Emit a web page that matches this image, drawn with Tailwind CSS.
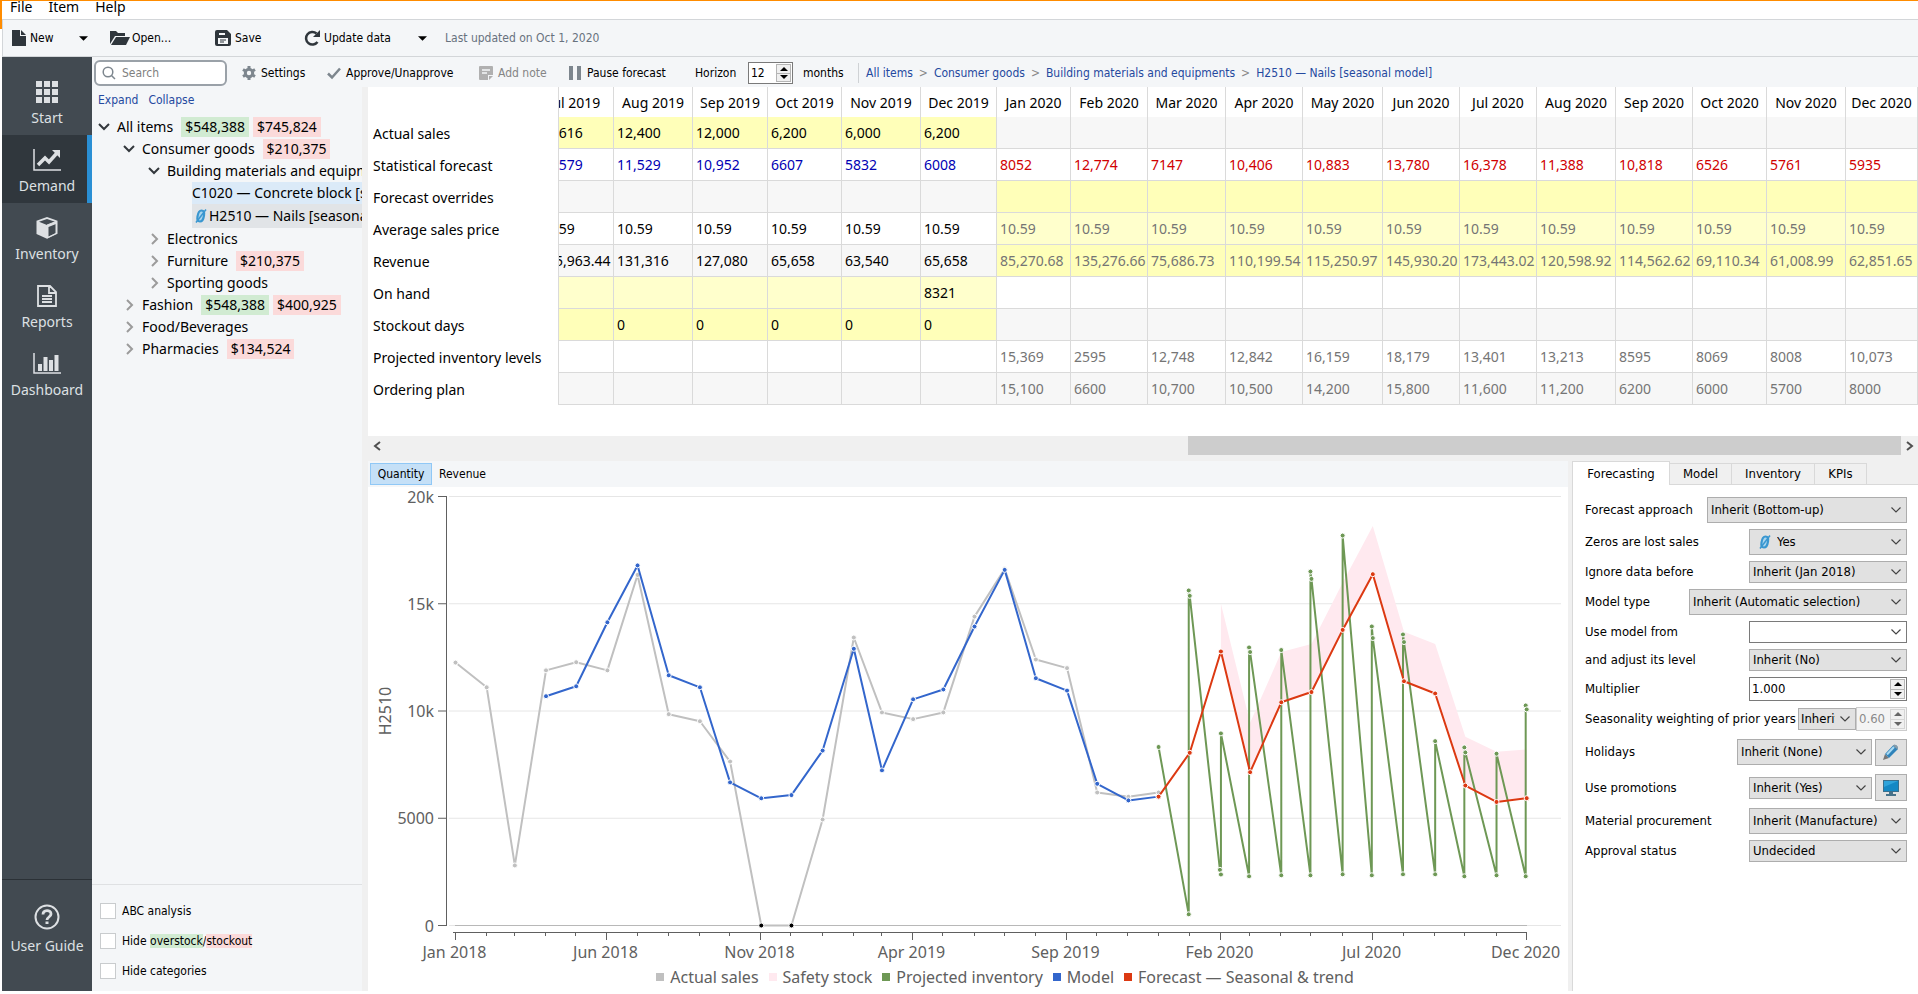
<!DOCTYPE html>
<html lang="en">
<head>
    <meta charset="UTF-8" />
    <meta name="viewport" content="width=device-width, initial-scale=1" />
    <title>Demand - H2510 Nails</title>
    <script src="https://cdn.jsdelivr.net/npm/@tailwindcss/browser@4"></script>
</head>
<body class="relative flex flex-col h-screen overflow-hidden bg-white pl-0.5 pb-[3px] border-t border-[#ff8c00] text-black text-xs font-['DejaVu_Sans_Condensed','DejaVu_Sans',sans-serif]">
    <!-- Shared icons -->
    <svg class="hidden">
        <symbol id="chevron" viewBox="0 0 10 6"><path d="M.5 .5 5 5 9.500 .5" fill="none" stroke="currentColor" stroke-width="1.200" /></symbol>
        <symbol id="open" viewBox="0 0 12 8"><path d="M1 1 6 6 11 1" fill="none" stroke="#33383d" stroke-width="2" /></symbol>
        <symbol id="closed" viewBox="0 0 12 12"><path d="M4 1 9 6 4 11" fill="none" stroke="#9b9b9b" stroke-width="2" /></symbol>
        <symbol id="caret" viewBox="0 0 10 5"><path d="M0 0h10L5 5z" fill="currentColor" /></symbol>
        <symbol id="zero" viewBox="0 0 12 14"><path d="M6.500 1.500c2.500 0 3 1.500 2.500 5s-1.500 6-4 6-3-1.500-2.500-5 1.500-6 4-6z" fill="#a9d5ee" stroke="#3a97d0" stroke-width="2.200" /><path d="M1 13.500 11 .5" stroke="#3a97d0" stroke-width="1.500" /></symbol>
    </svg>
    <div class="absolute left-0 top-0 w-0.5 h-7 bg-[#ff8c00]"></div>

    <!-- Menu bar -->
    <div class="flex items-start gap-4 h-[18px] shrink-0 pl-2 text-sm font-['Noto_Sans',sans-serif] overflow-hidden">
        <a href="#" class="h-3 flex items-center">File</a>
        <a href="#" class="h-3 flex items-center">Item</a>
        <a href="#" class="h-3 flex items-center">Help</a>
    </div>

    <!-- Main toolbar -->
    <header class="flex items-center h-[38px] shrink-0 pl-2 bg-[#f4f6f8] border-y border-l border-[#d3d6d9]">
        <button class="flex items-center gap-[3px] w-[68px]">
            <svg class="w-4 h-4" viewBox="0 0 16 16" fill="#2f363c"><path d="M1 0h8v6h6v10H1z" /><path d="M10 0l5 5h-5z" /></svg>New
        </button>
        <button class="w-[31px]" aria-label="New options"><svg class="w-[9px] h-[5px]"><use href="#caret" /></svg></button>
        <button class="flex items-center gap-0.5 w-[105px]">
            <svg class="w-5 h-4" viewBox="0 0 20 16" fill="#2f363c"><path d="M0 14V1h6l2 2h7v3H5z" /><path d="M6 7h14l-4 8H1z" /></svg>Open...
        </button>
        <button class="flex items-center gap-1 w-[89px]">
            <svg class="w-4 h-4" viewBox="0 0 16 16"><path d="M2 0h10l4 4v10a2 2 0 0 1-2 2H2a2 2 0 0 1-2-2V2a2 2 0 0 1 2-2z" fill="#2f363c" /><path d="M4 3h6v2H4zM3 8h10v6H3z" fill="#f4f6f8" /><path d="M5 10h6M5 12h4" stroke="#2f363c" /></svg>Save
        </button>
        <button class="flex items-center gap-1 w-[114px]">
            <svg class="w-4 h-4" viewBox="0 0 16 16"><path d="M12.500 3.500A6.300 6.300 0 1 0 13.500 12" fill="none" stroke="#2f363c" stroke-width="2.500" /><path d="M16 0v7H9z" fill="#2f363c" /></svg>Update data
        </button>
        <button class="w-[27px]" aria-label="Update options"><svg class="w-[9px] h-[5px]"><use href="#caret" /></svg></button>
        <span class="text-[#68727e]">Last updated on Oct 1, 2020</span>
    </header>

    <div class="flex flex-1 min-h-0">
        <!-- Navigation -->
        <nav class="flex flex-col w-[90px] shrink-0 pt-2.5 bg-[#424a51] text-[#dde0e3] text-sm font-['Noto_Sans',sans-serif]">
            <a href="#" class="flex flex-col items-center h-[68px] pt-[13px] gap-1">
                <svg class="w-7 h-6" viewBox="0 0 28 24" fill="currentColor"><path d="M3 1h6v6H3zM11 1h6v6h-6zM19 1h6v6h-6zM3 9h6v6H3zM11 9h6v6h-6zM19 9h6v6h-6zM3 17h6v6H3zM11 17h6v6h-6zM19 17h6v6h-6z" /></svg>
                Start
            </a>
            <a href="#" class="flex flex-col items-center h-[68px] pt-[13px] gap-1 bg-[#30373d] border-r-5 border-[#2a8fd4] pl-[5px]">
                <svg class="w-7 h-6" viewBox="0 0 28 24"><path d="M1 1v21h27" fill="none" stroke="currentColor" stroke-width="1.500" /><path d="M5 17l7-7 4 4 8-9" fill="none" stroke="currentColor" stroke-width="3.500" /><path d="M19 2h8v8z" fill="currentColor" /></svg>
                Demand
            </a>
            <a href="#" class="flex flex-col items-center h-[68px] pt-[13px] gap-1">
                <svg class="w-7 h-6" viewBox="0 0 28 24"><path d="M14 1l10.500 3.800v13L14 22.800 3.500 18V4.800z" fill="currentColor" /><path d="M14 3l8 2.800-8 3.200-8-3.200zM15.500 11l7.500-3v9l-7.500 3.500z" fill="#424a51" /><path d="M14 9l9-3.500v12L14 22" fill="none" stroke="currentColor" /></svg>
                Inventory
            </a>
            <a href="#" class="flex flex-col items-center h-[68px] pt-[13px] gap-1">
                <svg class="w-7 h-6" viewBox="0 0 28 24" fill="none" stroke="currentColor" stroke-width="1.800"><path d="M5 2h12l6 6v14H5zM16 2v7h7M9 12h10M9 15h10M9 18h10" /></svg>
                Reports
            </a>
            <a href="#" class="flex flex-col items-center h-[68px] pt-[13px] gap-1">
                <svg class="w-7 h-6" viewBox="0 0 28 24"><path d="M1 1v20h27" fill="none" stroke="currentColor" stroke-width="1.500" /><path d="M5 12h4v7H5zM10.500 5h4v14h-4zM16 8h4v11h-4zM21.500 3h4v16h-4z" fill="currentColor" /></svg>
                Dashboard
            </a>
            <a href="#" class="flex flex-col items-center h-[112px] mt-auto pt-6 gap-1 border-t border-[#2b3136]">
                <svg class="w-7 h-7" viewBox="0 0 28 28"><circle cx="14" cy="13" r="11.500" fill="none" stroke="currentColor" stroke-width="2" /><path d="M10 10.500c0-5 8-5 8-.5 0 3-4 3-4 6" fill="none" stroke="currentColor" stroke-width="2.800" /><path d="M12.500 17.500h3v2.500h-3z" fill="currentColor" /></svg>
                User Guide
            </a>
        </nav>

        <div class="flex flex-col flex-1 min-w-0 bg-[#f4f6f8]">
            <!-- Item toolbar -->
            <div class="flex items-center h-[30px] shrink-0 pl-0.5 pt-0.5 whitespace-nowrap">
                <label class="flex items-center gap-1.5 w-[133px] h-[26px] mr-[15px] px-1.5 bg-white border-2 border-[#9aa1a8] rounded-md">
                    <svg class="w-3.5 h-3.5 shrink-0" viewBox="0 0 14 14" fill="none" stroke="#7d868e" stroke-width="1.500"><circle cx="6" cy="6" r="4.800" /><path d="M9.500 9.500 13 13" /></svg>
                    <input type="text" placeholder="Search" aria-label="Search" class="w-full outline-none placeholder:text-[#7f7f7f]" />
                </label>
                <button class="flex items-center gap-[5px] w-[85px]">
                    <svg class="w-3.5 h-3.5" viewBox="0 0 14 14"><circle cx="7" cy="7" r="3.700" fill="none" stroke="#7d868e" stroke-width="3" /><path d="M7 0v2.500M7 11.500V14M1 3.500l2 1.200M11 9.300l2 1.200M1 10.500l2-1.200M11 4.700l2-1.200" stroke="#7d868e" stroke-width="3" /></svg>Settings
                </button>
                <button class="flex items-center gap-[5px] w-[152px]">
                    <svg class="w-3.5 h-3.5" viewBox="0 0 14 14"><path d="M1 7.500 5 11.500 13 2.500" fill="none" stroke="#7d868e" stroke-width="2.500" /></svg>Approve/Unapprove
                </button>
                <button class="flex items-center gap-[5px] w-[90px] text-[#858585]" disabled>
                    <svg class="w-3.5 h-3.5" viewBox="0 0 14 14"><path d="M1 0h12a1 1 0 0 1 1 1v8H9v5H1a1 1 0 0 1-1-1V1a1 1 0 0 1 1-1z" fill="#b0b0b0" /><path d="M10 14v-4h4z" fill="#b0b0b0" /><path d="M3 4h8M3 7h5" stroke="#f4f6f8" stroke-width="1.500" /></svg>Add note
                </button>
                <button class="flex items-center gap-1.5 w-[126px]">
                    <svg class="w-3 h-3.5" viewBox="0 0 12 14" fill="#7d868e"><path d="M0 0h4v14H0zM8 0h4v14H8z" /></svg>Pause forecast
                </button>
                <label for="horizon" class="w-[53px]">Horizon</label>
                <div class="flex items-center w-[45px] h-[22px] mr-2.5 p-px pl-0.5 bg-white border border-[#7a7a7a]">
                    <input id="horizon" type="text" value="12" class="w-[25px] outline-none" />
                    <div class="flex flex-col w-[15px] h-full">
                        <button class="flex flex-1 items-center justify-center bg-[#f0f0f0] border border-[#b5b5b5]" aria-label="Increase horizon"><svg class="w-2 h-1 rotate-180"><use href="#caret" /></svg></button>
                        <button class="flex flex-1 items-center justify-center bg-[#f0f0f0] border border-t-0 border-[#b5b5b5]" aria-label="Decrease horizon"><svg class="w-2 h-1"><use href="#caret" /></svg></button>
                    </div>
                </div>
                <span class="w-[55px]">months</span>
                <div class="flex gap-1.5 items-center h-5 pl-[7px] border-l border-[#cfd2d5] text-[#24499f]">
                    <a href="#">All items</a><span class="text-[#888]">&gt;</span>
                    <a href="#">Consumer goods</a><span class="text-[#888]">&gt;</span>
                    <a href="#">Building materials and equipments</a><span class="text-[#888]">&gt;</span>
                    <a href="#">H2510 — Nails [seasonal model]</a>
                </div>
            </div>

            <div class="flex flex-1 min-h-0">
                <!-- Item tree -->
                <aside class="flex flex-col w-[270px] shrink-0 overflow-hidden">
                    <div class="flex gap-2.5 pl-1.5 h-[29px] pt-[5px] text-[#24499f]">
                        <a href="#">Expand</a>
                        <a href="#">Collapse</a>
                    </div>
                    <ul class="whitespace-nowrap text-sm leading-5 font-['Noto_Sans',sans-serif]">
                        <li class="flex items-center h-[22px] pl-1.5"><svg class="w-3 h-2 mr-[7px]"><use href="#open" /></svg>All items <span class="ml-2 px-1 bg-[#d1ebd2]">$548,388</span><span class="ml-1 px-1 bg-[#fbdada]">$745,824</span></li>
                        <li class="flex items-center h-[22px] pl-[31px]"><svg class="w-3 h-2 mr-[7px]"><use href="#open" /></svg>Consumer goods <span class="ml-2 px-1 bg-[#fbdada]">$210,375</span></li>
                        <li class="flex items-center h-[22px] pl-14"><svg class="w-3 h-2 mr-[7px] shrink-0"><use href="#open" /></svg><span class="flex-1 min-w-0 overflow-hidden">Building materials and equipments</span></li>
                        <li class="flex items-center h-[22px] ml-[100px] bg-[#dbeaf8]"><span class="flex-1 min-w-0 overflow-hidden">C1020 — Concrete block [seasonal model]</span></li>
                        <li class="flex items-center h-6 ml-[100px] pl-[3px] bg-[#e1e4e7]"><svg class="w-3 h-3.5 mr-0.5 shrink-0"><use href="#zero" /></svg><span class="flex-1 min-w-0 overflow-hidden">H2510 — Nails [seasonal model]</span></li>
                        <li class="flex items-center h-[22px] pl-14"><svg class="w-3 h-3 mr-[7px]"><use href="#closed" /></svg>Electronics</li>
                        <li class="flex items-center h-[22px] pl-14"><svg class="w-3 h-3 mr-[7px]"><use href="#closed" /></svg>Furniture <span class="ml-2 px-1 bg-[#fbdada]">$210,375</span></li>
                        <li class="flex items-center h-[22px] pl-14"><svg class="w-3 h-3 mr-[7px]"><use href="#closed" /></svg>Sporting goods</li>
                        <li class="flex items-center h-[22px] pl-[31px]"><svg class="w-3 h-3 mr-[7px]"><use href="#closed" /></svg>Fashion <span class="ml-2 px-1 bg-[#d1ebd2]">$548,388</span><span class="ml-1 px-1 bg-[#fbdada]">$400,925</span></li>
                        <li class="flex items-center h-[22px] pl-[31px]"><svg class="w-3 h-3 mr-[7px]"><use href="#closed" /></svg>Food/Beverages</li>
                        <li class="flex items-center h-[22px] pl-[31px]"><svg class="w-3 h-3 mr-[7px]"><use href="#closed" /></svg>Pharmacies <span class="ml-2 px-1 bg-[#fbdada]">$134,524</span></li>
                    </ul>
                    <div class="flex flex-col gap-3.5 mt-auto pl-2 pt-[18px] pb-3 border-t border-[#dfe1e3] leading-4">
                        <label class="flex items-center gap-1.5"><input type="checkbox" class="appearance-none w-4 h-4 bg-white border border-[#c9ccce]" />ABC analysis</label>
                        <label class="flex items-center gap-1.5"><input type="checkbox" class="appearance-none w-4 h-4 bg-white border border-[#c9ccce]" /><span>Hide <span class="bg-[#d1ebd2]">overstock</span>/<span class="bg-[#fbdada]">stockout</span></span></label>
                        <label class="flex items-center gap-1.5"><input type="checkbox" class="appearance-none w-4 h-4 bg-white border border-[#c9ccce]" />Hide categories</label>
                    </div>
                </aside>

                <main class="flex flex-col flex-1 min-w-0 border-l-6 border-[#f0f0f0]">
                    <!-- Forecast table, rtl scroller so that it opens on the latest months -->
                    <div dir="rtl" class="shrink-0 overflow-hidden bg-white pb-[31px]">
                        <table dir="ltr" class="table-fixed w-max border-separate border-spacing-0 text-sm leading-5 whitespace-nowrap font-['Noto_Sans',sans-serif]">
                            <colgroup id="planCols"></colgroup>
                            <thead><tr id="planHead" class="h-[30px]"></tr></thead>
                            <tbody id="planBody"></tbody>
                        </table>
                    </div>
                    <div class="flex items-start h-[25px] shrink-0 bg-[#f0f0f0]">
                        <button class="w-[17px] h-[19px] flex items-center justify-center" aria-label="Scroll left"><svg class="w-2.5 h-2.5 -rotate-90 text-[#505050]" viewBox="0 0 10 10"><path d="M1 8l4-5 4 5" fill="none" stroke="currentColor" stroke-width="2" /></svg></button>
                        <div class="flex flex-1 justify-end"><div class="w-[47%] h-[19px] bg-[#cdcdcd]"></div></div>
                        <button class="w-[17px] h-[19px] flex items-center justify-center" aria-label="Scroll right"><svg class="w-2.5 h-2.5 rotate-90 text-[#505050]" viewBox="0 0 10 10"><path d="M1 8l4-5 4 5" fill="none" stroke="currentColor" stroke-width="2" /></svg></button>
                    </div>

                    <div class="flex flex-1 min-h-0">
                        <!-- Chart -->
                        <section class="flex flex-col flex-1 min-w-0 bg-white">
                            <div class="flex items-center gap-[7px] h-[26px] shrink-0 pl-0.5 bg-[#f4f6f8]">
                                <button class="h-[22px] px-1.5 w-[62px] bg-[#c5e0f7] border border-[#90c8f6]">Quantity</button>
                                <button>Revenue</button>
                            </div>
                            <svg id="chart" class="w-full flex-1 min-h-0 text-base font-['Noto_Sans',sans-serif]" viewBox="0 0 1200 476" fill="#606060"></svg>
                            <div class="flex justify-center gap-2.5 h-7 shrink-0 pl-[74px] text-base leading-7 whitespace-nowrap text-[#606060] font-['Noto_Sans',sans-serif]">
                                <span class="flex items-center gap-1.5"><i class="w-2 h-2 bg-[#c0c0c0]"></i>Actual sales</span>
                                <span class="flex items-center gap-1.5"><i class="w-2 h-2 bg-[#ffe9ef]"></i>Safety stock</span>
                                <span class="flex items-center gap-1.5"><i class="w-2 h-2 bg-[#6e9855]"></i>Projected inventory</span>
                                <span class="flex items-center gap-1.5"><i class="w-2 h-2 bg-[#3366cc]"></i>Model</span>
                                <span class="flex items-center gap-1.5"><i class="w-2 h-2 bg-[#dc3912]"></i>Forecast — Seasonal &amp; trend</span>
                            </div>
                        </section>

                        <!-- Forecasting settings -->
                        <aside class="flex flex-col w-[350px] shrink-0 pl-1 bg-[#f0f0f0] text-[13px]">
                            <div class="flex items-end h-6 shrink-0">
                                <button class="w-[98px] h-6 bg-white border border-b-0 border-[#d9d9d9]">Forecasting</button>
                                <button class="w-[62px] h-[22px] border border-l-0 border-[#d9d9d9]">Model</button>
                                <button class="w-[83px] h-[22px] border border-l-0 border-[#d9d9d9]">Inventory</button>
                                <button class="w-[52px] h-[22px] border border-l-0 border-[#d9d9d9]">KPIs</button>
                                <div class="flex-1 h-px bg-[#d9d9d9]"></div>
                            </div>
                            <form class="flex flex-col flex-1 gap-1.5 pl-3 pr-[11px] pt-3 bg-white border-l border-[#d9d9d9]">
                                <div class="flex items-center justify-between h-[26px]">
                                    <label for="approach">Forecast approach</label>
                                    <div class="relative w-[200px] h-[26px]"><select id="approach" class="appearance-none w-full h-full pl-[3px] bg-[#e1e1e1] border border-[#adadad]"><option>Inherit (Bottom-up)</option></select><svg class="absolute right-1.5 top-2.5 w-2.5 h-1.5 text-[#444]"><use href="#chevron" /></svg></div>
                                </div>
                                <div class="flex items-center justify-between h-[26px]">
                                    <label for="zeros">Zeros are lost sales</label>
                                    <div class="relative w-[158px] h-[26px]"><select id="zeros" class="appearance-none w-full h-full pl-[27px] bg-[#e1e1e1] border border-[#adadad]"><option>Yes</option></select><svg class="absolute left-2.5 top-1.5 w-3 h-3.5"><use href="#zero" /></svg><svg class="absolute right-1.5 top-2.5 w-2.5 h-1.5 text-[#444]"><use href="#chevron" /></svg></div>
                                </div>
                                <div class="flex items-center justify-between h-[22px]">
                                    <label for="ignore">Ignore data before</label>
                                    <div class="relative w-[158px] h-[22px]"><select id="ignore" class="appearance-none w-full h-full pl-[3px] bg-[#e1e1e1] border border-[#adadad]"><option>Inherit (Jan 2018)</option></select><svg class="absolute right-1.5 top-2 w-2.5 h-1.5 text-[#444]"><use href="#chevron" /></svg></div>
                                </div>
                                <div class="flex items-center justify-between h-[26px]">
                                    <label for="modelType">Model type</label>
                                    <div class="relative w-[218px] h-[26px]"><select id="modelType" class="appearance-none w-full h-full pl-[3px] bg-[#e1e1e1] border border-[#adadad]"><option>Inherit (Automatic selection)</option></select><svg class="absolute right-1.5 top-2.5 w-2.5 h-1.5 text-[#444]"><use href="#chevron" /></svg></div>
                                </div>
                                <div class="flex items-center justify-between h-[22px]">
                                    <label for="modelFrom">Use model from</label>
                                    <div class="relative w-[158px] h-[22px]"><select id="modelFrom" class="appearance-none w-full h-full pl-[3px] bg-white border border-[#7a7a7a]"><option></option></select><svg class="absolute right-1.5 top-2 w-2.5 h-1.5 text-[#444]"><use href="#chevron" /></svg></div>
                                </div>
                                <div class="flex items-center justify-between h-[22px]">
                                    <label for="adjust">and adjust its level</label>
                                    <div class="relative w-[158px] h-[22px]"><select id="adjust" class="appearance-none w-full h-full pl-[3px] bg-[#e1e1e1] border border-[#adadad]"><option>Inherit (No)</option></select><svg class="absolute right-1.5 top-2 w-2.5 h-1.5 text-[#444]"><use href="#chevron" /></svg></div>
                                </div>
                                <div class="flex items-center justify-between h-6">
                                    <label for="multiplier">Multiplier</label>
                                    <div class="flex items-center w-[158px] h-6 p-px pl-0.5 bg-white border border-[#7a7a7a]">
                                        <input id="multiplier" type="text" value="1.000" class="flex-1 min-w-0 outline-none" />
                                        <div class="flex flex-col w-[15px] h-full">
                                            <button type="button" class="flex flex-1 items-center justify-center bg-[#f0f0f0] border border-[#b5b5b5]" aria-label="Increase multiplier"><svg class="w-2 h-1 rotate-180"><use href="#caret" /></svg></button>
                                            <button type="button" class="flex flex-1 items-center justify-center bg-[#f0f0f0] border border-t-0 border-[#b5b5b5]" aria-label="Decrease multiplier"><svg class="w-2 h-1"><use href="#caret" /></svg></button>
                                        </div>
                                    </div>
                                </div>
                                <div class="flex items-center h-6">
                                    <label for="weighting" class="mr-auto whitespace-nowrap">Seasonality weighting of prior years</label>
                                    <div class="relative w-[58px] shrink-0 h-[22px]"><select id="weighting" class="appearance-none w-full h-full pl-0.5 pr-5 overflow-hidden bg-[#e1e1e1] border border-[#adadad]"><option>Inherit</option></select><svg class="absolute right-1.5 top-2 w-2.5 h-1.5 text-[#444]"><use href="#chevron" /></svg></div>
                                    <div class="flex items-center w-[51px] shrink-0 h-6 p-px pl-0.5 bg-[#f4f4f4] border border-[#cccccc]">
                                        <input type="text" value="0.60" aria-label="Weighting value" class="flex-1 min-w-0 text-[#8a8a8a] outline-none" disabled />
                                        <div class="flex flex-col w-[15px] h-full text-[#666]">
                                            <button type="button" class="flex flex-1 items-center justify-center bg-[#f0f0f0] border border-[#d5d5d5]" aria-label="Increase weighting" disabled><svg class="w-2 h-1 rotate-180"><use href="#caret" /></svg></button>
                                            <button type="button" class="flex flex-1 items-center justify-center bg-[#f0f0f0] border border-t-0 border-[#d5d5d5]" aria-label="Decrease weighting" disabled><svg class="w-2 h-1"><use href="#caret" /></svg></button>
                                        </div>
                                    </div>
                                </div>
                                <div class="flex items-center h-[30px]">
                                    <label for="holidays" class="mr-auto">Holidays</label>
                                    <div class="relative w-[135px] h-[26px] mr-[3px]"><select id="holidays" class="appearance-none w-full h-full pl-[3px] bg-[#e1e1e1] border border-[#adadad]"><option>Inherit (None)</option></select><svg class="absolute right-1.5 top-2.5 w-2.5 h-1.5 text-[#444]"><use href="#chevron" /></svg></div>
                                    <button type="button" class="flex items-center justify-center w-8 h-[27px] bg-[#e1e1e1] border border-[#adadad]" aria-label="Edit holidays">
                                        <svg class="w-4 h-4" viewBox="0 0 16 16"><path d="M0 16l2-6 4 4z" fill="#777" /><path d="M2 10 10 1.500c2-2 6 1 4.500 4L6 14z" fill="#2f83ba" /><path d="M4 10.500 11 3" stroke="#a9daf3" stroke-width="2" /><path d="M10 1.500c2-2 6 1 4.500 4z" fill="#8a9aa5" /></svg>
                                    </button>
                                </div>
                                <div class="flex items-center h-[29px]">
                                    <label for="promotions" class="mr-auto">Use promotions</label>
                                    <div class="relative w-[123px] h-[22px] mr-[3px]"><select id="promotions" class="appearance-none w-full h-full pl-[3px] bg-[#e1e1e1] border border-[#adadad]"><option>Inherit (Yes)</option></select><svg class="absolute right-1.5 top-2 w-2.5 h-1.5 text-[#444]"><use href="#chevron" /></svg></div>
                                    <button type="button" class="flex items-center justify-center w-8 h-[27px] bg-[#e1e1e1] border border-[#adadad]" aria-label="Show promotions">
                                        <svg class="w-4 h-4" viewBox="0 0 16 16"><path d="M0 0h16v12H0z" fill="#3b6f8c" /><path d="M1 1h14v10H1z" fill="#1488c4" /><path d="M1 1h14L1 7z" fill="#2fa3da" /><path d="M6 12h4v2h3v2H3v-2h3z" fill="#47728a" /></svg>
                                    </button>
                                </div>
                                <div class="flex items-center justify-between h-[26px]">
                                    <label for="procurement">Material procurement</label>
                                    <div class="relative w-[158px] h-[26px]"><select id="procurement" class="appearance-none w-full h-full pl-[3px] bg-[#e1e1e1] border border-[#adadad]"><option>Inherit (Manufacture)</option></select><svg class="absolute right-1.5 top-2.5 w-2.5 h-1.5 text-[#444]"><use href="#chevron" /></svg></div>
                                </div>
                                <div class="flex items-center justify-between h-[22px]">
                                    <label for="approval">Approval status</label>
                                    <div class="relative w-[158px] h-[22px]"><select id="approval" class="appearance-none w-full h-full pl-[3px] bg-[#e1e1e1] border border-[#adadad]"><option>Undecided</option></select><svg class="absolute right-1.5 top-2 w-2.5 h-1.5 text-[#444]"><use href="#chevron" /></svg></div>
                                </div>
                            </form>
                        </aside>
                    </div>
                </main>
            </div>
        </div>
    </div>

    <script>
        // Forecast table: six months of history, then twelve forecast months
        const months = ['Jul 2019', 'Aug 2019', 'Sep 2019', 'Oct 2019', 'Nov 2019', 'Dec 2019', 'Jan 2020', 'Feb 2020', 'Mar 2020', 'Apr 2020', 'May 2020', 'Jun 2020', 'Jul 2020', 'Aug 2020', 'Sep 2020', 'Oct 2020', 'Nov 2020', 'Dec 2020'];
        const colWidths = [78, 79, 75, 74, 79, 76, 74, 77, 78, 77, 80, 77, 77, 79, 77, 74, 79, 72];
        const HISTORY = 6;
        const none = n => Array(n).fill('');
        const rows = [
            { label: 'Actual sales', edit: 'past', values: ['16,616', '12,400', '12,000', '6,200', '6,000', '6,200', ...none(12)] },
            { label: 'Statistical forecast', model: true, values: ['16,579', '11,529', '10,952', '6607', '5832', '6008', '8052', '12,774', '7147', '10,406', '10,883', '13,780', '16,378', '11,388', '10,818', '6526', '5761', '5935'] },
            { label: 'Forecast overrides', edit: 'future', values: none(18) },
            { label: 'Average sales price', edit: 'future', values: Array(18).fill('10.59') },
            { label: 'Revenue', edit: 'future', values: ['175,963.44', '131,316', '127,080', '65,658', '63,540', '65,658', '85,270.68', '135,276.66', '75,686.73', '110,199.54', '115,250.97', '145,930.20', '173,443.02', '120,598.92', '114,562.62', '69,110.34', '61,008.99', '62,851.65'] },
            { label: 'On hand', edit: 'past', values: [...none(5), '8321', ...none(12)] },
            { label: 'Stockout days', edit: 'past', values: ['0', '0', '0', '0', '0', '0', ...none(12)] },
            { label: 'Projected inventory levels', values: [...none(6), '15,369', '2595', '12,748', '12,842', '16,159', '18,179', '13,401', '13,213', '8595', '8069', '8008', '10,073'] },
            { label: 'Ordering plan', values: [...none(6), '15,100', '6600', '10,700', '10,500', '14,200', '15,800', '11,600', '11,200', '6200', '6000', '5700', '8000'] }
        ];

        document.getElementById('planCols').innerHTML = [191, ...colWidths].map(w => `<col style="width:${w}px">`).join('');
        document.getElementById('planHead').innerHTML = '<td class="sticky left-0 z-10 bg-white border-r border-[#dadada]"></td>' +
            months.map(m => `<th class="pt-0.5 border-r border-[#dadada] font-normal text-center">${m}</th>`).join('');
        document.getElementById('planBody').innerHTML = rows.map((row, r) => {
            const shaded = r % 2 === 0;
            const cells = row.values.map((v, i) => {
                const past = i < HISTORY;
                const editable = row.edit === (past ? 'past' : 'future');
                const bg = editable ? (shaded ? 'bg-[#ffffb9]' : 'bg-[#ffffcc]') : (shaded ? 'bg-[#f7f7f7]' : 'bg-white');
                const color = row.model ? (past ? 'text-[#0000b4]' : 'text-[#d00000]') : (past ? 'text-black' : 'text-[#757575]');
                return `<td class="pl-[3px] border-r border-b border-[#dadada] ${bg} ${color}">${v}</td>`;
            }).join('');
            return `<tr class="h-8"><th class="sticky left-0 z-10 pl-[5px] pt-0.5 bg-white border-r border-[#dadada] text-left font-normal">${row.label}</th>${cells}</tr>`;
        }).join('');

        // Chart
        const DAY = 86400000;
        const start = Date.UTC(2018, 0, 1);
        const px = t => 87.5 + (t - start) / DAY * 1071.2 / 1065;
        const py = v => 438.5 - v * 429 / 20000;
        const month = i => Date.UTC(2018, i, 1);
        const monthly = (first, values) => values.map((v, i) => [px(month(first + i)), py(v)]);

        const actual = monthly(0, [12257, 11104, 2800, 11895, 12273, 11895, 16343, 9852, 9522, 7644, 0, 0, 4942, 13426, 9934, 9621, 9934, 14400, 16616, 12400, 12000, 6200, 6000, 6200]);
        const model = monthly(3, [10690, 11153, 14135, 16787, 11664, 11104, 6672, 5930, 6079, 8155, 12900, 7232, 10544, 11005, 13937, 16579, 11529, 10952, 6607, 5832, 6008]);
        const forecast = monthly(23, [6008, 8052, 12774, 7147, 10406, 10883, 13780, 16378, 11388, 10818, 6526, 5761, 5935]);
        const safety = monthly(25, [15000, 9450, 12745, 13118, 15974, 18630, 13690, 13118, 8797, 8098, 8210]);
        const inventory = [
            ['2019-12-01', 8321], ['2019-12-31', 522], ['2019-12-31', 15620], ['2020-01-01', 15369],
            ['2020-01-31', 2595], ['2020-02-01', 2377], ['2020-02-01', 8956],
            ['2020-02-29', 2293], ['2020-02-29', 12964], ['2020-03-01', 12748],
            ['2020-04-01', 2340], ['2020-04-01', 12842],
            ['2020-04-30', 2340], ['2020-04-30', 16500], ['2020-05-01', 16159],
            ['2020-06-01', 2386], ['2020-06-01', 18179],
            ['2020-06-30', 2340], ['2020-06-30', 13942], ['2020-07-01', 13401],
            ['2020-07-31', 2386], ['2020-07-31', 13569], ['2020-08-01', 13213],
            ['2020-09-01', 2386], ['2020-09-01', 8595],
            ['2020-09-30', 2293], ['2020-09-30', 8302], ['2020-10-01', 8069],
            ['2020-11-01', 2340], ['2020-11-01', 8008],
            ['2020-11-30', 2293], ['2020-11-30', 10260], ['2020-12-01', 10073]
        ].map(([d, v]) => [px(Date.parse(d)), py(v)]);

        const line = (points, color) =>
            `<polyline points="${points.join(' ')}" fill="none" stroke="${color}" stroke-width="2" stroke-linejoin="round"/>` +
            points.map(([x, y]) => `<circle cx="${x}" cy="${y}" r="2.5" fill="${y === py(0) ? '#000' : color}" stroke="#fff"/>`).join('');

        let svg = '';
        [[0, '0'], [5000, '5000'], [10000, '10k'], [15000, '15k'], [20000, '20k']].forEach(([v, text]) => {
            svg += `<path d="M81 ${py(v)}H1193" stroke="#e6e6e6"/><path d="M70 ${py(v)}h9" stroke="#606060"/>`;
            svg += `<text x="66" y="${py(v) + 6}" text-anchor="end">${text}</text>`;
        });
        svg += `<path d="M78.5 ${py(20000)}V${py(0)}M85 445.5H1159" stroke="#606060" fill="none"/>`;
        svg += `<path d="M87 ${py(0)}H1159" stroke="#b8b8b8"/>`;
        for (let i = 0; i < 36; i++) {
            const x = Math.round(px(month(i))) - 0.5;
            svg += `<path d="M${x} 445v${i % 5 ? 4 : 8}" stroke="#606060"/>`;
            if (i % 5 === 0) {
                const text = new Date(month(i)).toLocaleString('en-US', { month: 'short', year: 'numeric', timeZone: 'UTC' });
                svg += `<text x="${x - 1}" y="471" text-anchor="middle">${text}</text>`;
            }
        }
        svg += '<text transform="translate(23 224) rotate(-90)" text-anchor="middle">H2510</text>';
        svg += `<polygon points="${[...safety, ...forecast.slice(2).reverse()].join(' ')}" fill="#ffe9ef"/>`;
        svg += line(actual, '#c0c0c0') + line(inventory, '#6e9855') + line(model, '#3366cc') + line(forecast, '#dc3912');
        document.getElementById('chart').innerHTML = svg;
    </script>
</body>
</html>
